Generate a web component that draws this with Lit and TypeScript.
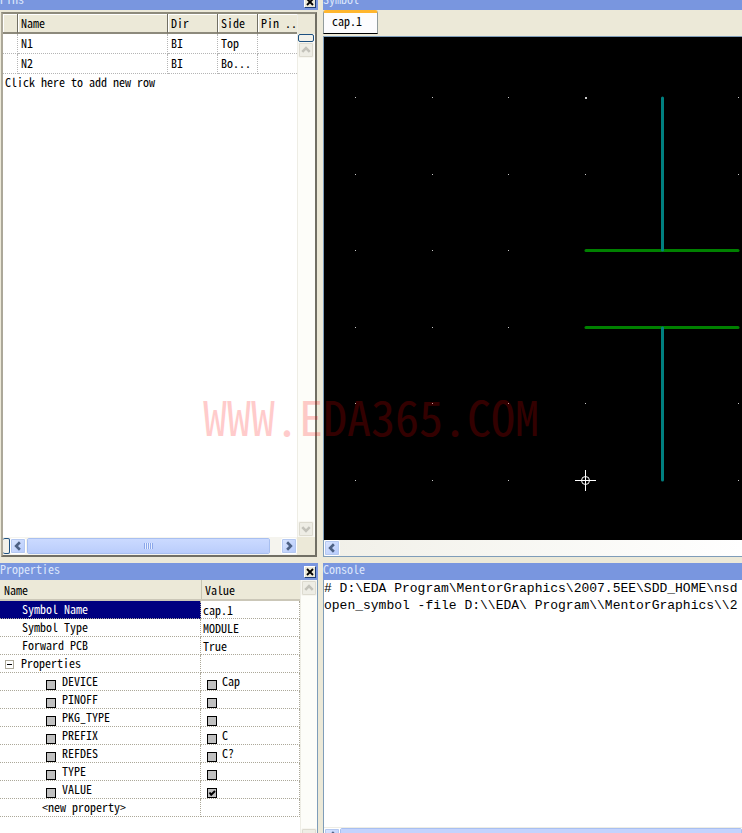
import { LitElement, html, css, svg, nothing } from "lit";
import { customElement, property } from "lit/decorators.js";
import { classMap } from "lit/directives/class-map.js";

type Direction = "up" | "down" | "left" | "right";

const ARROWS: Record<Direction, string> = {
  up: "M3.5 9.5 L7.5 5.5 L11.5 9.5",
  down: "M3.5 5.5 L7.5 9.5 L11.5 5.5",
  left: "M9.5 3.5 L5.5 7.5 L9.5 11.5",
  right: "M5.5 3.5 L9.5 7.5 L5.5 11.5",
};

@customElement("scroll-button")
class ScrollButton extends LitElement {
  @property() direction: Direction = "up";
  @property({ type: Boolean }) idle = false;

  static styles = css`
    :host { display: block; flex: none; }
    .btn {
      display: block; width: 16px; height: 16px; padding: 0; box-sizing: border-box;
      border: 1px solid #fff; border-radius: 2px; outline: 1px solid #b4c8f0; outline-offset: -2px;
      background: linear-gradient(135deg, #dbe6ff, #b4c9fb);
    }
    .idle { background: #eeede5; outline-color: #dddbd0; border-color: #f7f6f0; }
    svg { display: block; width: 14px; height: 14px; }
    path { fill: none; stroke: #4d6185; stroke-width: 2.8; }
    .idle path { stroke: #c3c2ba; }
  `;

  render() {
    return html`<button class=${classMap({ btn: true, idle: this.idle })} aria-label="Scroll ${this.direction}" ?disabled=${this.idle}>
      <svg viewBox="0 0 15 15">${svg`<path d=${ARROWS[this.direction]} />`}</svg>
    </button>`;
  }
}

@customElement("title-bar")
class TitleBar extends LitElement {
  @property() label = "";
  @property({ type: Boolean }) closable = false;

  static styles = css`
    :host {
      display: flex; flex: none; justify-content: space-between; align-items: flex-end;
      height: 17px; overflow: hidden; background: #7996df; color: #dce6fb;
    }
    .label { line-height: 16px; padding-bottom: 3px; }
    .close {
      width: 12px; height: 12px; margin: 0 2px 2px 0; padding: 0; box-sizing: border-box;
      border: 1px solid #1c3d78; border-top-color: #fff; border-left-color: #fff; background: #ece9d8;
    }
    svg { display: block; width: 10px; height: 10px; }
    path { stroke: #000; stroke-width: 1.8; fill: none; }
  `;

  render() {
    return html`<span class="label">${this.label}</span>
      ${this.closable
        ? html`<button class="close" aria-label="Close ${this.label}">
            <svg viewBox="0 0 10 10"><path d="M2 2 L8 8 M8 2 L2 8" /></svg>
          </button>`
        : nothing}`;
  }
}

@customElement("pins-panel")
class PinsPanel extends LitElement {
  private pins = [
    { name: "N1", dir: "BI", side: "Top" },
    { name: "N2", dir: "BI", side: "Bo..." },
  ];

  static styles = css`
    :host { display: flex; flex-direction: column; min-width: 0; min-height: 0; }
    title-bar { height: 10px; }
    .frame {
      flex: 1; min-height: 0; display: grid; grid-template: minmax(0, 1fr) 18px / minmax(0, 1fr) 18px;
      margin: 2px 1px 0 1px; border: 2px solid #716f64; border-left-color: #aca899; border-top-color: #8d8a7c; background: #fff;
    }
    table { width: 100%; border-collapse: separate; border-spacing: 0; table-layout: fixed; }
    th, td {
      height: 20px; padding: 0 0 2px 3px; box-sizing: border-box; text-align: left; font-weight: normal;
      white-space: nowrap; overflow: hidden; line-height: 16px;
    }
    th {
      background: #ece9d8; border-right: 1px solid #716f64; border-bottom: 2px solid #8d8a7c;
      box-shadow: inset 1px 1px #fff; padding-bottom: 0;
    }
    td { border-right: 1px dotted #b5b5b5; border-bottom: 1px dotted #b5b5b5; }
    th:last-child, td:last-child { border-right: 0; }
    .gutter { width: 15px; }
    .name { width: 150px; }
    .dir { width: 50px; }
    .side { width: 40px; }
    .add { display: block; padding: 0 0 0 2px; border: 0; background: none; font: inherit; font-feature-settings: inherit; line-height: 16px; }
    .vbar { display: flex; flex-direction: column; background: #fdfdf9; border-left: 1px solid #eeede5; }
    .vbar .top { height: 20px; background: #ece9d8; }
    .split {
      flex: none; box-sizing: border-box; border: 2px solid #1c5080; border-radius: 2px; background: #f2f1ea;
    }
    .vbar .split { height: 8px; width: 16px; border-width: 1px; }
    .track { flex: 1; }
    .hbar { display: flex; align-items: center; background: #f5f4ee; }
    .hbar .split { width: 7px; height: 16px; border-width: 1px; border-left: 0; }
    .thumb {
      flex: 1; height: 16px; margin: 0 11px 0 1px; box-sizing: border-box; display: flex; align-items: center; justify-content: center;
      border: 1px solid #fff; border-radius: 2px; outline: 1px solid #a8bff0; outline-offset: -1px;
      background: linear-gradient(#cbdaff, #bacdfb);
    }
    .grip { width: 9px; height: 6px; background: repeating-linear-gradient(90deg, #8ba7ea 0 1px, #e6eeff 1px 2px); }
    .corner { background: #ece9d8; }
  `;

  render() {
    return html`<title-bar label="Pins" closable></title-bar>
      <div class="frame">
        <div>
          <table>
            <thead>
              <tr>
                <th class="gutter"></th><th class="name">Name</th><th class="dir">Dir</th>
                <th class="side">Side</th><th>Pin ..</th>
              </tr>
            </thead>
            <tbody>
              ${this.pins.map((p) => html`<tr><td></td><td>${p.name}</td><td>${p.dir}</td><td>${p.side}</td><td></td></tr>`)}
            </tbody>
          </table>
          <button class="add">Click here to add new row</button>
        </div>
        <div class="vbar">
          <div class="top"></div>
          <div class="split"></div>
          <scroll-button direction="up" idle></scroll-button>
          <div class="track"></div>
          <scroll-button direction="down" idle></scroll-button>
        </div>
        <div class="hbar">
          <div class="split"></div>
          <scroll-button direction="left"></scroll-button>
          <div class="thumb"><div class="grip"></div></div>
          <scroll-button direction="right"></scroll-button>
        </div>
        <div class="corner"></div>
      </div>`;
  }
}

@customElement("symbol-panel")
class SymbolPanel extends LitElement {
  static styles = css`
    :host { display: flex; flex-direction: column; min-width: 0; min-height: 0; }
    title-bar { height: 10px; }
    .tabs { display: flex; height: 26px; flex: none; }
    .tab {
      width: 55px; height: 24px; box-sizing: border-box; padding: 0 0 4px 8px; text-align: left; font: inherit;
      font-feature-settings: inherit; line-height: 16px;
      border: 1px solid #919b9c; border-top: 3px solid #ffb62e; border-bottom: 1px solid #000; border-radius: 3px 3px 0 0; background: #fcfcfe;
    }
    .view { flex: 1; min-height: 0; display: flex; flex-direction: column; border: 1px solid #7f9db9; border-right: 0; }
    .canvas { flex: 1; min-height: 0; width: 100%; display: block; background: #000; }
    .dot { fill: #c8c8c8; }
    .plate { stroke: #008000; stroke-width: 3; stroke-linecap: round; }
    .pin { stroke: #008080; stroke-width: 3; stroke-linecap: round; }
    .origin { stroke: #fff; fill: none; shape-rendering: crispEdges; }
    .ring { stroke: #fff; fill: none; }
    .hbar { flex: none; display: flex; align-items: center; height: 16px; background: linear-gradient(90deg, #f1f0e8, #fff); }
  `;

  render() {
    const xs = [31, 108, 184, 261, 414];
    const ys = [60, 137, 213, 290, 366, 443];
    return html`<title-bar label="Symbol"></title-bar>
      <div class="tabs" role="tablist"><button class="tab" role="tab" aria-selected="true">cap.1</button></div>
      <div class="view">
        <svg class="canvas" role="img" aria-label="Capacitor symbol">
          ${ys.map((y) => xs.map((x) => svg`<rect class="dot" x=${x} y=${y} width="1" height="1" />`))}
          <rect class="dot" x="261" y="60" width="2" height="2" />
          <line class="plate" x1="262" y1="213.5" x2="414" y2="213.5" />
          <line class="plate" x1="262" y1="290.5" x2="414" y2="290.5" />
          <line class="pin" x1="338.5" y1="61" x2="338.5" y2="213" />
          <line class="pin" x1="338.5" y1="291" x2="338.5" y2="443" />
          <path class="origin" d="M251 443.5 H272 M261.5 433 V454" />
          <circle class="ring" cx="261.5" cy="443.5" r="4" />
        </svg>
        <div class="hbar"><scroll-button direction="left"></scroll-button></div>
      </div>`;
  }
}

interface SymbolProperty { name: string; value: string; shown?: boolean; }

@customElement("properties-panel")
class PropertiesPanel extends LitElement {
  private entries: SymbolProperty[] = [
    { name: "DEVICE", value: "Cap" },
    { name: "PINOFF", value: "" },
    { name: "PKG_TYPE", value: "" },
    { name: "PREFIX", value: "C" },
    { name: "REFDES", value: "C?" },
    { name: "TYPE", value: "" },
    { name: "VALUE", value: "", shown: true },
  ];

  static styles = css`
    :host { display: flex; flex-direction: column; min-width: 0; min-height: 0; }
    .body { flex: 1; min-height: 0; display: flex; border-right: 1px solid #7f9db9; background: #fff; }
    .grid { flex: 1; min-width: 0; }
    table { width: 100%; border-collapse: separate; border-spacing: 0; table-layout: fixed; }
    th {
      height: 21px; padding: 0 0 0 4px; box-sizing: border-box; text-align: left; font-weight: normal;
      background: #ece9d8; border-bottom: 2px solid #cbc7b8; line-height: 16px;
    }
    .value { width: 99px; }
    th.value { box-shadow: inset 1px 0 #c7c5b2; }
    td {
      height: 18px; padding: 0 0 0 2px; box-sizing: border-box; line-height: 16px; white-space: nowrap;
      border-right: 1px dotted #aca899; border-bottom: 1px dotted #aca899;
    }
    .row { display: flex; height: 17px; }
    .field { padding-left: 20px; }
    .selected { background: #000080; color: #fff; }
    .group { gap: 7px; padding-left: 3px; }
    .toggle {
      width: 9px; height: 9px; margin-top: 5px; padding: 0; box-sizing: border-box; border: 1px solid #aca899; background: #fff;
      display: flex; align-items: center; justify-content: center;
    }
    .minus { width: 5px; height: 1px; background: #000; }
    .item { gap: 6px; padding-left: 44px; }
    .entry { gap: 5px; padding-left: 4px; }
    .new { padding-left: 40px; }
    .check {
      appearance: none; flex: none; align-self: flex-end; width: 10px; height: 10px; margin: 0; box-sizing: border-box;
      border: 1px solid #000; background: #c0c0c0;
    }
    .box { position: relative; display: flex; align-self: flex-end; }
    .tick { position: absolute; inset: 0; width: 10px; height: 10px; pointer-events: none; }
    .tick path { fill: none; stroke: #000; stroke-width: 2; }
    .vbar { flex: none; width: 17px; box-sizing: border-box; display: flex; flex-direction: column; background: #fdfdf9; border-left: 1px solid #eeede5; }
    .track { flex: 1; }
    .edge { height: 5px; overflow: hidden; }
  `;

  render() {
    const field = (name: string, value: string, selected = false) => html`<tr>
      <td class=${classMap({ selected })}><div class="row field">${name}</div></td>
      <td>${value}</td>
    </tr>`;
    return html`<title-bar label="Properties" closable></title-bar>
      <div class="body">
        <div class="grid">
          <table>
            <thead><tr><th>Name</th><th class="value">Value</th></tr></thead>
            <tbody>
              ${field("Symbol Name", "cap.1", true)}
              ${field("Symbol Type", "MODULE")}
              ${field("Forward PCB", "True")}
              <tr>
                <td><div class="row group"><button class="toggle" aria-label="Collapse Properties"><span class="minus"></span></button>Properties</div></td>
                <td></td>
              </tr>
              ${this.entries.map((a) => html`<tr>
                <td><label class="row item"><input class="check" type="checkbox" />${a.name}</label></td>
                <td><label class="row entry">
                  <span class="box">
                    <input class="check" type="checkbox" aria-label="Show ${a.name} value" .checked=${!!a.shown} />
                    ${a.shown ? html`<svg class="tick" viewBox="0 0 10 10"><path d="M2.5 4.5 L4.2 6.7 L8 3" /></svg>` : nothing}
                  </span>${a.value}</label></td>
              </tr>`)}
              <tr><td><div class="row new">&lt;new property&gt;</div></td><td></td></tr>
            </tbody>
          </table>
        </div>
        <div class="vbar">
          <scroll-button direction="up" idle></scroll-button>
          <div class="track"></div>
          <div class="edge"><scroll-button direction="down" idle></scroll-button></div>
        </div>
      </div>`;
  }
}

@customElement("console-panel")
class ConsolePanel extends LitElement {
  static styles = css`
    :host { display: flex; flex-direction: column; min-width: 0; min-height: 0; }
    .body { flex: 1; min-height: 0; display: flex; flex-direction: column; border-left: 1px solid #7f9db9; background: #fff; }
    .log { flex: 1; margin: 0; overflow: hidden; font: 13px/17px "Liberation Mono", monospace; }
    .edge { display: flex; height: 5px; overflow: hidden; border-top: 1px solid #eeede5; }
    .thumb { flex: 1; height: 16px; box-sizing: border-box; border: 1px solid #fff; outline: 1px solid #a8bff0; outline-offset: -1px; border-radius: 2px; background: #c3d3fd; }
  `;

  render() {
    const lines = [
      "# D:\\EDA Program\\MentorGraphics\\2007.5EE\\SDD_HOME\\nsd",
      "open_symbol -file D:\\\\EDA\\ Program\\\\MentorGraphics\\\\2",
    ];
    return html`<title-bar label="Console"></title-bar>
      <div class="body">
        <pre class="log">${lines.join("\n")}</pre>
        <div class="edge"><scroll-button direction="left"></scroll-button><div class="thumb"></div></div>
      </div>`;
  }
}

@customElement("app-root")
class AppRoot extends LitElement {
  static styles = css`
    :host {
      position: relative; display: grid; height: 100vh; overflow: hidden; gap: 6px 5px;
      grid-template: minmax(0, 1fr) 270px / 318px minmax(0, 1fr);
      background: #ece9d8; color: #000;
      font: 12px/16px "Noto Sans CJK SC", "Liberation Mono", monospace;
      font-feature-settings: "hwid";
    }
    .mark {
      position: absolute; inset: 0; display: flex; align-items: center; justify-content: center; padding-bottom: 4px;
      font-size: 48px; color: #f00; opacity: 0.2; pointer-events: none;
    }
  `;

  render() {
    return html`<pins-panel></pins-panel>
      <symbol-panel></symbol-panel>
      <properties-panel></properties-panel>
      <console-panel></console-panel>
      <div class="mark">WWW.EDA365.COM</div>`;
  }
}
